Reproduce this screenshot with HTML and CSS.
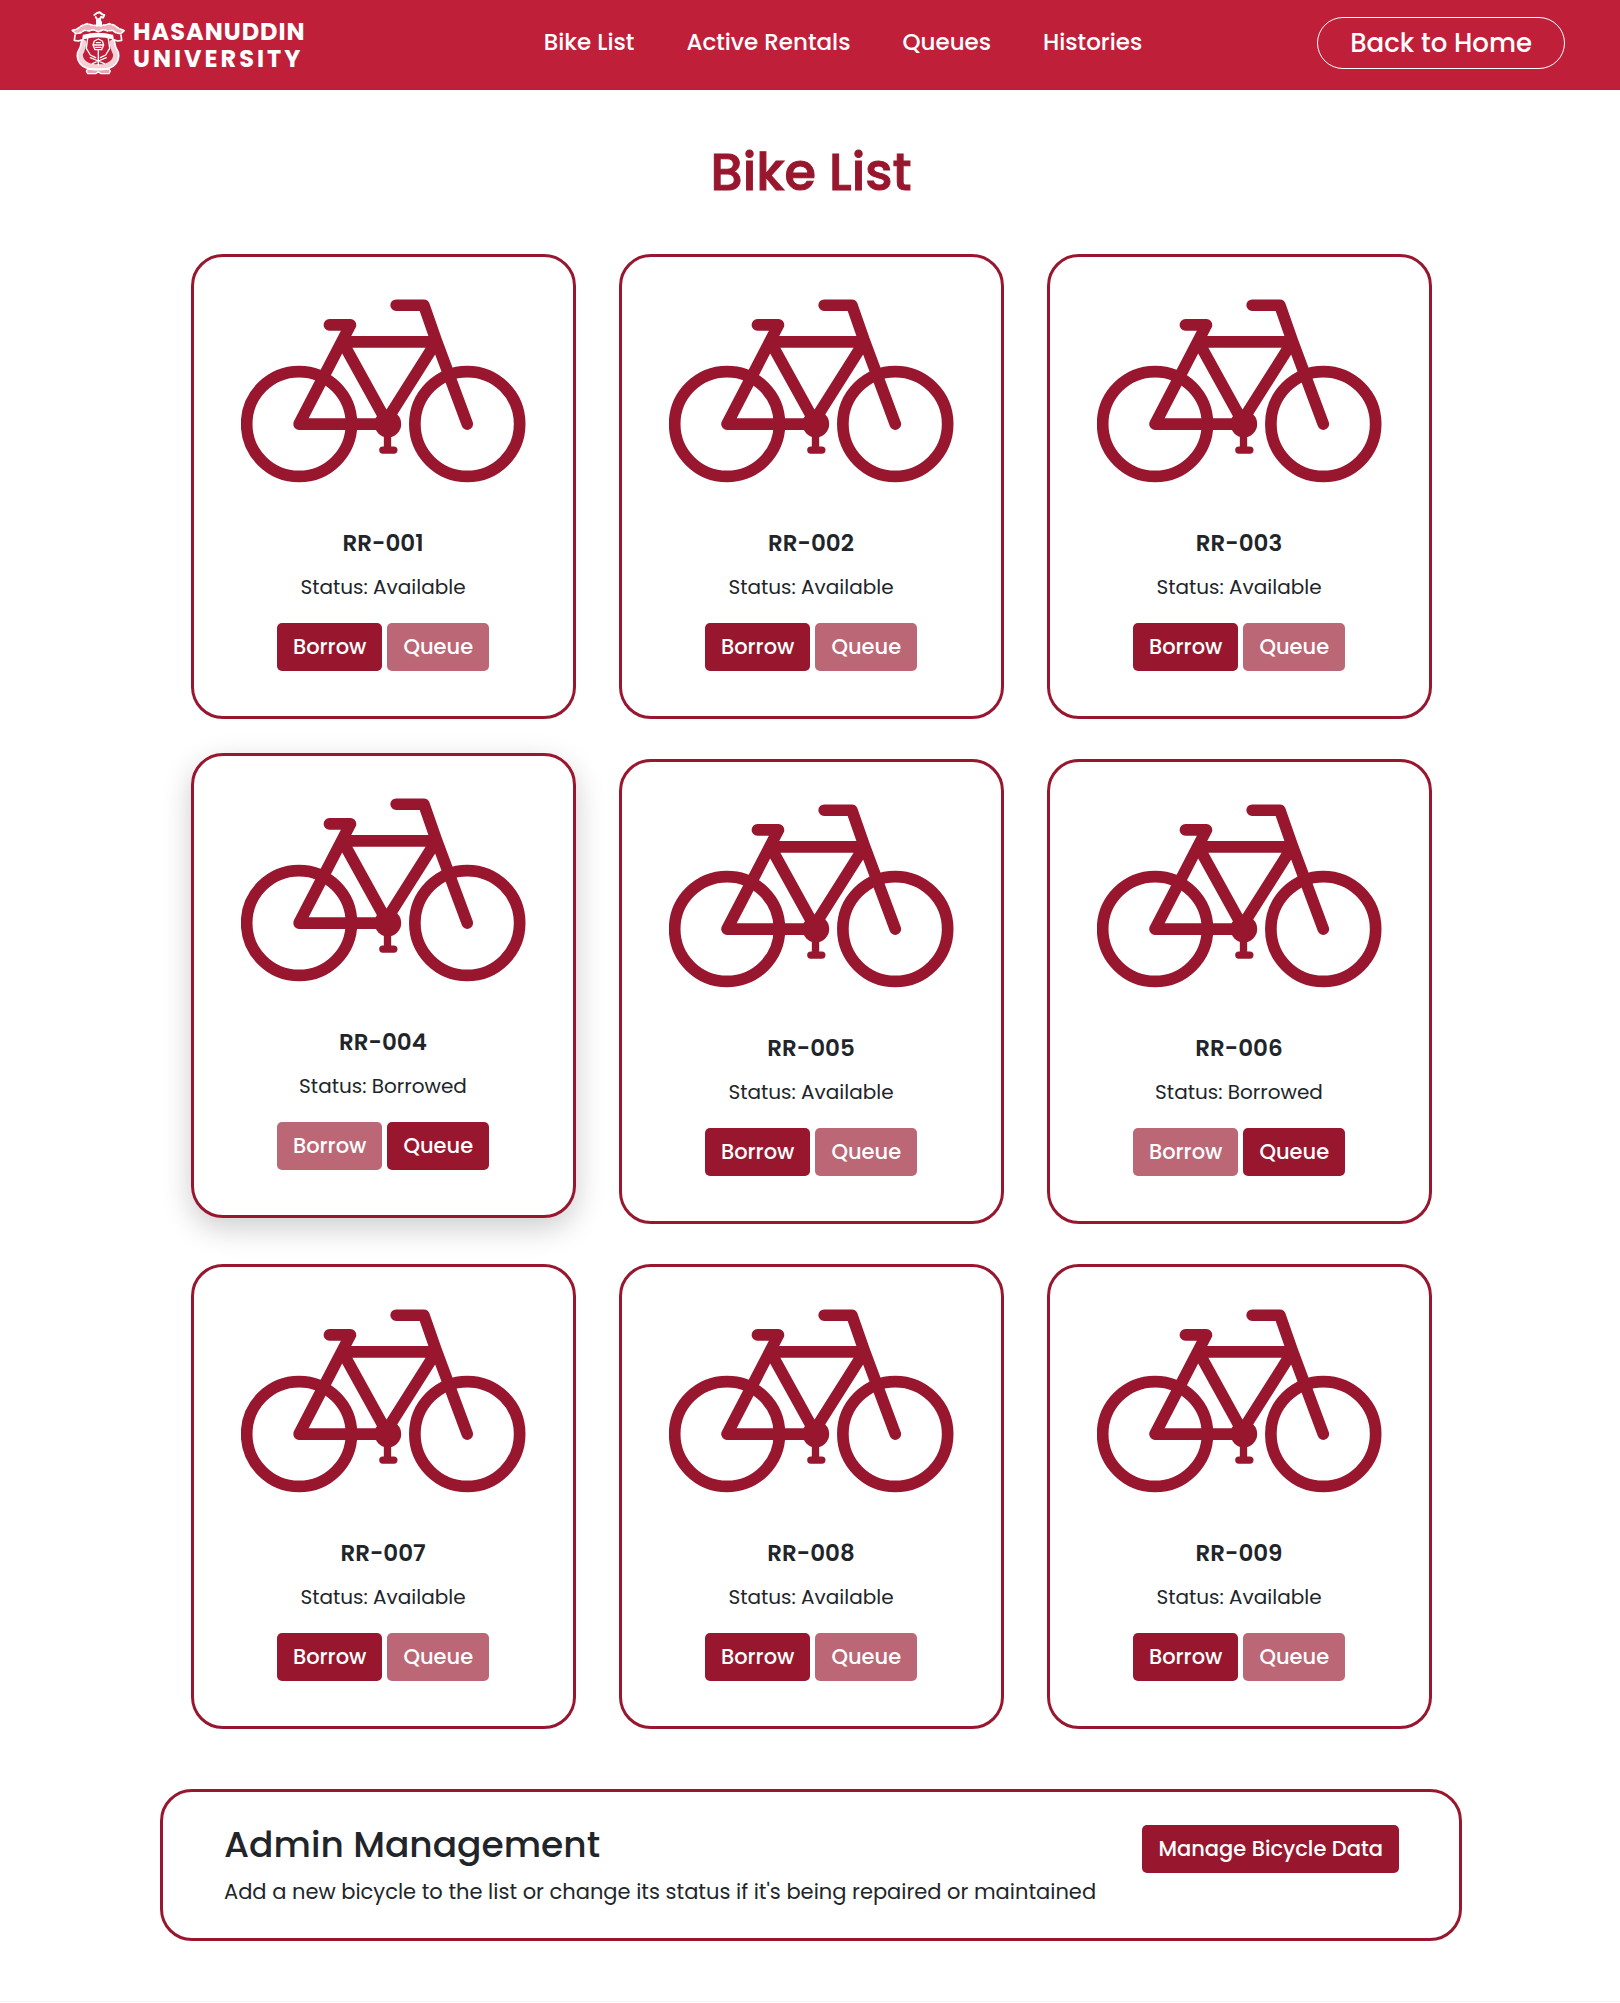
FILE: index.html
```html
<!DOCTYPE html>
<html lang="en">
<head>
<meta charset="utf-8">
<meta name="viewport" content="width=device-width, initial-scale=1">
<title>Bike List</title>
<link rel="stylesheet" href="styles.css">
</head>
<body>
<svg class="sprite" aria-hidden="true">
  <symbol id="bike" viewBox="180 178 854 550">
    <g fill="none" stroke="currentColor" stroke-width="35" stroke-linecap="round" stroke-linejoin="round">
      <circle cx="354" cy="552" r="157"/>
      <circle cx="858" cy="552" r="157"/>
      <path d="M858 552 765 302 728 196H645M445 255H508L354 552H620L484 306H765L620 535"/>
    </g>
    <circle cx="620" cy="552" r="40" fill="currentColor"/>
    <path d="M619 580V630M605 630H638" fill="none" stroke="currentColor" stroke-width="22" stroke-linecap="round"/>
  </symbol>
</svg>
<header class="navbar">
  <a class="brand" href="#" aria-label="Hasanuddin University">
    <svg class="emblem" viewBox="34 32 162 192" aria-hidden="true">
      <g fill="none" stroke="#fff" stroke-linecap="round" stroke-linejoin="round">
        <path d="M104 44l8-6 8-2 8 6 6 2-4 8-6-2-4 8 4 8v10M108 50l4 6M112 60v16M118 56v18" stroke-width="6"/>
        <path d="M38 90l14-4 14-10 16-6 14 4 20 2 20-2 14-4 16 6 14 10 14 4-10 10-14-2-12-8-14 2-12-4-16 6-16-6-12 4-14-2-12 8-14 2z" fill="#fff" fill-opacity=".65" stroke-width="5" stroke-dasharray="9 5"/>
        <path d="M46 104l-2 16 12 2 14-4 2-12M184 104l2 16-12 2-14-4-2-12" stroke-width="5"/>
        <path d="M72 106q42-12 86 0v8q-42-12-86 0z" stroke-width="5" fill="#fff"/>
        <path d="M66 122q-2 18-12 34-6 24 16 42 20 12 45 10 25 2 45-10 22-18 16-42-10-16-12-34" stroke-width="5"/>
        <path d="M72 126q0 14-10 34-2 18 14 30 18 12 39 9 21 3 39-9 16-12 14-30-10-20-10-34" stroke-width="16" stroke-opacity=".8" stroke-dasharray="10 2"/>
        <path d="M84 114l-4 30 12 20 16 8M146 114l4 30-12 20-16 8" stroke-width="4"/>
        <path d="M116 150v44M92 172l24 10 24-10M98 190l18-8 18 8" stroke-width="4"/>
        <path d="M104 122l12-6 12 6 4 12-6 14h-20l-6-14zM102 134h28M108 141h16M110 127h12" stroke-width="4"/>
        <path d="M84 206h64l4 6-4 8h-24l-8-6-8 6H84l-4-8z" stroke-width="4" fill="#fff" fill-opacity=".6"/>
      </g>
    </svg>
    <span class="wordmark"><span class="wordmark-top">HASANUDDIN</span><span class="wordmark-bottom">UNIVERSITY</span></span>
  </a>
  <nav class="nav-links">
    <a href="#">Bike List</a>
    <a href="#">Active Rentals</a>
    <a href="#">Queues</a>
    <a href="#">Histories</a>
  </nav>
  <a class="home-link" href="#">Back to Home</a>
</header>
<main>
  <h1>Bike List</h1>
  <section class="bikes">
    <article class="card"><svg class="bike"><use href="#bike"/></svg><h2>RR-001</h2><p>Status: Available</p><div class="actions"><button type="button" class="btn">Borrow</button><button type="button" class="btn" disabled>Queue</button></div></article>
    <article class="card"><svg class="bike"><use href="#bike"/></svg><h2>RR-002</h2><p>Status: Available</p><div class="actions"><button type="button" class="btn">Borrow</button><button type="button" class="btn" disabled>Queue</button></div></article>
    <article class="card"><svg class="bike"><use href="#bike"/></svg><h2>RR-003</h2><p>Status: Available</p><div class="actions"><button type="button" class="btn">Borrow</button><button type="button" class="btn" disabled>Queue</button></div></article>
    <article class="card raised"><svg class="bike"><use href="#bike"/></svg><h2>RR-004</h2><p>Status: Borrowed</p><div class="actions"><button type="button" class="btn" disabled>Borrow</button><button type="button" class="btn">Queue</button></div></article>
    <article class="card"><svg class="bike"><use href="#bike"/></svg><h2>RR-005</h2><p>Status: Available</p><div class="actions"><button type="button" class="btn">Borrow</button><button type="button" class="btn" disabled>Queue</button></div></article>
    <article class="card"><svg class="bike"><use href="#bike"/></svg><h2>RR-006</h2><p>Status: Borrowed</p><div class="actions"><button type="button" class="btn" disabled>Borrow</button><button type="button" class="btn">Queue</button></div></article>
    <article class="card"><svg class="bike"><use href="#bike"/></svg><h2>RR-007</h2><p>Status: Available</p><div class="actions"><button type="button" class="btn">Borrow</button><button type="button" class="btn" disabled>Queue</button></div></article>
    <article class="card"><svg class="bike"><use href="#bike"/></svg><h2>RR-008</h2><p>Status: Available</p><div class="actions"><button type="button" class="btn">Borrow</button><button type="button" class="btn" disabled>Queue</button></div></article>
    <article class="card"><svg class="bike"><use href="#bike"/></svg><h2>RR-009</h2><p>Status: Available</p><div class="actions"><button type="button" class="btn">Borrow</button><button type="button" class="btn" disabled>Queue</button></div></article>
  </section>
  <section class="admin">
    <div class="admin-text">
      <h2>Admin Management</h2>
      <p>Add a new bicycle to the list or change its status if it's being repaired or maintained</p>
    </div>
    <button type="button" class="btn">Manage Bicycle Data</button>
  </section>
</main>
<footer class="footer"></footer>
</body>
</html>
```

FILE: styles.css
```css
* { box-sizing: border-box; }
body {
  margin: 0;
  background: #fff;
  color: #212529;
  font-family: Poppins, Inter, "Open Sans", sans-serif;
  font-size: 20px;
}
h1, h2, p { margin: 0; }
a { color: inherit; text-decoration: none; }
.sprite { display: block; width: 0; height: 0; }

.navbar {
  display: grid;
  grid-template-columns: 1fr auto 1fr;
  align-items: center;
  height: 90px;
  padding: 0 55px 4px 71px;
  background: #c01f3a;
  color: #fff;
}
.brand { display: flex; align-items: center; gap: 8px; }
.emblem { width: 54px; height: 64px; }
.wordmark {
  display: flex;
  flex-direction: column;
  padding-top: 4px;
  font-size: 24px;
  font-weight: 700;
  line-height: 27px;
}
.wordmark-top { letter-spacing: 1px; }
.wordmark-bottom { letter-spacing: 3px; }
.nav-links {
  display: flex;
  gap: 52px;
  margin-left: 50px;
  padding-bottom: 2px;
  font-size: 23px;
  font-weight: 500;
}
.home-link {
  justify-self: end;
  padding: 0 32px;
  border: 1px solid #fff;
  border-radius: 26px;
  font-size: 26px;
  font-weight: 500;
  line-height: 50px;
}

main { padding: 40px 24px 60px 26px; }
h1 {
  color: #98172e;
  font-size: 51px;
  font-weight: 500;
  line-height: 84px;
  text-align: center;
  -webkit-text-stroke: 1px #98172e;
}
.bikes {
  display: grid;
  grid-template-columns: repeat(3, 1fr);
  gap: 40px 43px;
  max-width: 1241px;
  margin: 40px auto 60px;
}
.card {
  display: flex;
  flex-direction: column;
  align-items: center;
  padding: 42px 24px 45px;
  border: 3px solid #98172e;
  border-radius: 32px;
  background: #fff;
  text-align: center;
}
.raised {
  transform: translateY(-6px);
  box-shadow: 0 10px 30px rgba(0, 0, 0, .2);
}
.bike { width: 285px; max-width: 100%; height: 184px; color: #98172e; }
.card h2 { margin-top: 42px; font-size: 23px; font-weight: 600; line-height: 36px; }
.card p { margin: 10px 0 20px; line-height: 32px; }
.actions { display: flex; gap: 5px; }
.btn {
  padding: 0 16px;
  border: 0;
  border-radius: 5px;
  background: #98172e;
  color: #fff;
  font: 500 21px/48px Poppins, Inter, "Open Sans", sans-serif;
}
.btn:disabled { opacity: .65; }

.admin {
  display: flex;
  justify-content: space-between;
  align-items: flex-start;
  gap: 24px;
  max-width: 1302px;
  margin: 0 auto;
  padding: 33px 60px 30px 61px;
  border: 3px solid #98172e;
  border-radius: 32px;
}
.admin h2 { font-size: 36px; font-weight: 500; line-height: 40px; }
.admin p { font-size: 21px; line-height: 32px; margin-top: 11px; }
.footer { border-top: 1px solid #f5f5f5; }
```
